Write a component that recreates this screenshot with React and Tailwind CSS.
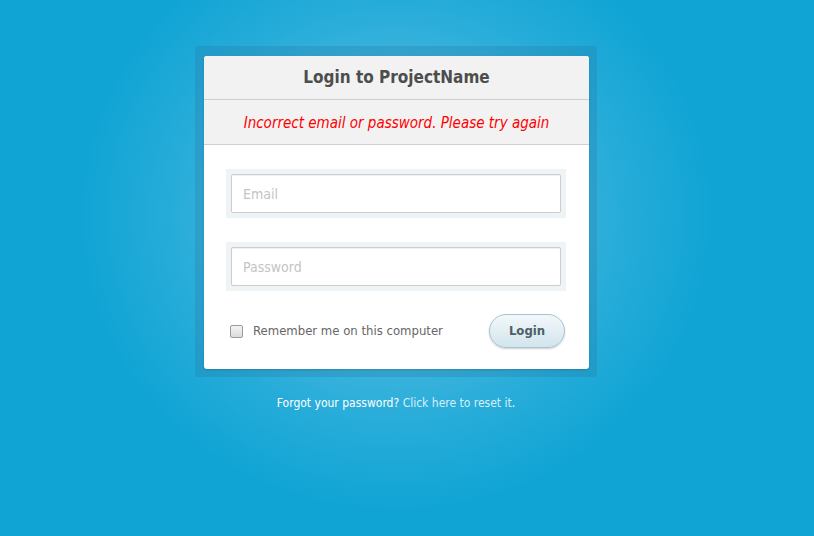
import { useState } from "react"

const font = "font-['Tahoma','DejaVu_Sans_Condensed','DejaVu_Sans',sans-serif]"

const Field = ({ type, placeholder }) => (
  <div className="bg-[#eef3f5] p-[5px]">
    <input
      type={type}
      placeholder={placeholder}
      className="w-full h-[39px] rounded-[2px] border border-[#cdcdcd] bg-white px-[11px] text-[14px] text-[#555] placeholder:text-[#c4c4c4] outline-none shadow-[inset_0_1px_1px_rgba(0,0,0,0.06)]"
    />
  </div>
)

export default function App() {
  const [remember, setRemember] = useState(false)

  return (
    <div
      className={`${font} min-h-[536px] w-full flex flex-col items-center pt-[46px] pr-[22px] bg-[radial-gradient(ellipse_320px_300px_at_396px_215px,#4ebde2_0%,#40b6de_45%,#27acd9_70%,#0fa4d4_100%)]`}
    >
      <div className="rounded-[4px] bg-[rgba(40,120,160,0.28)] pt-[10px] pb-[8px] pl-[9px] pr-[8px]">
        <div className="w-[385px] rounded-[3px] bg-white overflow-hidden shadow-[0_1px_2px_rgba(0,0,0,0.15)]">
          <div className="h-[44px] pt-[1px] flex items-center justify-center bg-[#f2f2f2] border-b border-[#cfcfcf]">
            <h1 className="text-[17px] font-bold text-[#4d4d4d]">Login to ProjectName</h1>
          </div>
          <div className="h-[45px] pt-[2px] flex items-center justify-center bg-[#f2f2f2] border-b border-[#cfcfcf]">
            <p className="text-[15px] italic text-[#ff0000]">Incorrect email or password. Please try again</p>
          </div>
          <div className="pl-[22px] pr-[23px] pt-[24px] pb-[21px]">
            <div className="flex flex-col gap-[24px]">
              <Field type="email" placeholder="Email" />
              <Field type="password" placeholder="Password" />
            </div>
            <div className="mt-[23px] flex items-center justify-between">
              <label className="flex items-center gap-[10px] pl-[4px] text-[13px] text-[#666]">
                <span
                  onClick={() => setRemember(!remember)}
                  className="w-[13px] h-[13px] rounded-[2px] border border-[#9a9a9a] bg-gradient-to-b from-[#f4f4f4] to-[#dcdcdc]"
                />
                Remember me on this computer
              </label>
              <button className="mr-[1px] w-[76px] h-[34px] rounded-full border border-[#a7c4d0] bg-gradient-to-b from-[#f2f8fa] to-[#d2e5ed] text-[13px] font-bold text-[#4d5e68] shadow-[0_1px_2px_rgba(0,0,0,0.2)]">
                Login
              </button>
            </div>
          </div>
        </div>
      </div>
      <p className="mt-[17px] text-[12px] text-white">
        Forgot your password? <a className="text-[#d8eef8]">Click here to reset it</a>.
      </p>
    </div>
  )
}
